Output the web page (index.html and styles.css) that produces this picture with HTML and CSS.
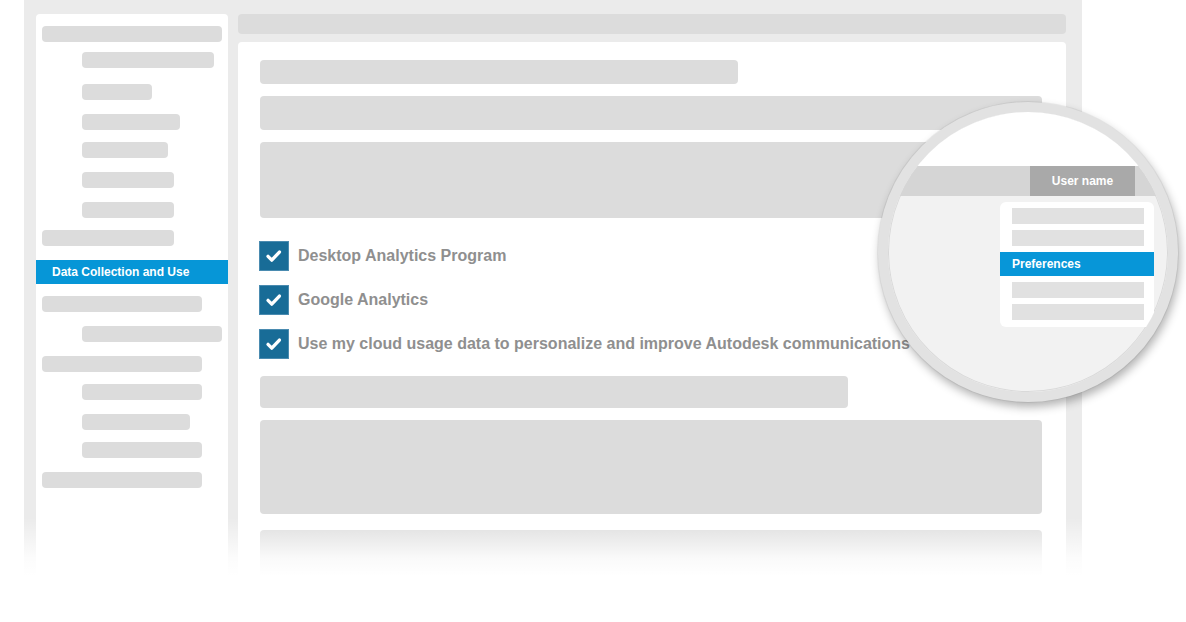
FILE: index.html
```html
<!DOCTYPE html>
<html lang="en">
<head>
<meta charset="utf-8">
<title>Data Collection and Use</title>
<link rel="stylesheet" href="styles.css">
</head>
<body>
<div class="page">
  <div class="frame">
    <aside class="sidebar">
      <div class="nav-ph lvl1" style="width:180px"></div>
      <div class="nav-ph lvl2 t10" style="width:132px"></div>
      <div class="nav-ph lvl2 t16" style="width:70px"></div>
      <div class="nav-ph lvl2 t14" style="width:98px"></div>
      <div class="nav-ph lvl2 t12" style="width:86px"></div>
      <div class="nav-ph lvl2 t14" style="width:92px"></div>
      <div class="nav-ph lvl2 t14" style="width:92px"></div>
      <div class="nav-ph lvl1 t12" style="width:132px"></div>
      <div class="nav-active t14">Data Collection and Use</div>
      <div class="nav-ph lvl1 t12" style="width:160px"></div>
      <div class="nav-ph lvl2 t14" style="width:140px"></div>
      <div class="nav-ph lvl1 t14" style="width:160px"></div>
      <div class="nav-ph lvl2 t12" style="width:120px"></div>
      <div class="nav-ph lvl2 t14" style="width:108px"></div>
      <div class="nav-ph lvl2 t12" style="width:120px"></div>
      <div class="nav-ph lvl1 t14" style="width:160px"></div>
    </aside>
    <main class="main">
      <div class="topbar"></div>
      <section class="card">
        <div class="ph h24" style="width:478px"></div>
        <div class="ph h34 gap12"></div>
        <div class="ph h76 gap12"></div>
        <ul class="checks">
          <li class="check">
            <span class="box"><svg viewBox="0 0 30 30" width="28" height="28"><path d="M8.6 15.4 L12.6 19.4 L20.8 10.8" fill="none" stroke="#fff" stroke-width="3.6" stroke-linecap="round" stroke-linejoin="round"/></svg></span>
            <span class="label">Desktop Analytics Program</span>
          </li>
          <li class="check">
            <span class="box"><svg viewBox="0 0 30 30" width="28" height="28"><path d="M8.6 15.4 L12.6 19.4 L20.8 10.8" fill="none" stroke="#fff" stroke-width="3.6" stroke-linecap="round" stroke-linejoin="round"/></svg></span>
            <span class="label">Google Analytics</span>
          </li>
          <li class="check">
            <span class="box"><svg viewBox="0 0 30 30" width="28" height="28"><path d="M8.6 15.4 L12.6 19.4 L20.8 10.8" fill="none" stroke="#fff" stroke-width="3.6" stroke-linecap="round" stroke-linejoin="round"/></svg></span>
            <span class="label">Use my cloud usage data to personalize and improve Autodesk communications</span>
          </li>
        </ul>
        <div class="ph h32 gap17" style="width:588px"></div>
        <div class="ph h94 gap12"></div>
        <div class="ph h60 gap16"></div>
      </section>
    </main>
  </div>
  <div class="fade"></div>
  <div class="magnifier">
    <div class="mag-top"></div>
    <div class="mag-bar">
      <span class="user-btn">User name</span>
    </div>
    <div class="mag-body">
      <div class="dropdown">
        <div class="dd-ph"></div>
        <div class="dd-ph"></div>
        <div class="dd-active">Preferences</div>
        <div class="dd-ph"></div>
        <div class="dd-ph"></div>
      </div>
    </div>
  </div>
</div>
</body>
</html>
```

FILE: styles.css
```css
* { box-sizing: border-box; }

html, body {
  margin: 0;
  padding: 0;
  background: #ffffff;
  font-family: "Liberation Sans", Arial, Helvetica, sans-serif;
}

.page {
  position: relative;
  width: 1186px;
  height: 622px;
  overflow: hidden;
}

.frame {
  margin-left: 24px;
  width: 1058px;
  height: 600px;
  background: #ebebeb;
  padding: 14px 16px 0 12px;
  display: flex;
  gap: 10px;
}

/* Sidebar */
.sidebar {
  width: 192px;
  flex: none;
  background: #ffffff;
  border-radius: 4px 4px 0 0;
  padding: 12px 6px 0 6px;
  display: flex;
  flex-direction: column;
}

.nav-ph {
  height: 16px;
  background: #dcdcdc;
  border-radius: 4px;
}

.nav-ph.lvl2 { margin-left: 40px; }

.t10 { margin-top: 10px; }
.t12 { margin-top: 12px; }
.t14 { margin-top: 14px; }
.t16 { margin-top: 16px; }

.nav-active {
  margin-left: -6px;
  margin-right: -6px;
  height: 24px;
  line-height: 24px;
  padding-left: 16px;
  background: #0696d7;
  color: #ffffff;
  font-size: 12px;
  font-weight: bold;
}

/* Main */
.main {
  flex: 1;
  display: flex;
  flex-direction: column;
}

.topbar {
  height: 20px;
  background: #dcdcdc;
  border-radius: 4px;
  margin-bottom: 8px;
  flex: none;
}

.card {
  flex: 1;
  background: #ffffff;
  border-radius: 4px 4px 0 0;
  padding: 18px 24px 0 22px;
  display: flex;
  flex-direction: column;
}

.ph {
  background: #dcdcdc;
  border-radius: 4px;
  flex: none;
}

.h24 { height: 24px; }
.h32 { height: 32px; }
.h34 { height: 34px; }
.h60 { height: 60px; }
.h76 { height: 76px; }
.h94 { height: 94px; }

.gap12 { margin-top: 12px; }
.gap16 { margin-top: 16px; }
.gap17 { margin-top: 17px; }

.checks {
  list-style: none;
  margin: 23px 0 0 -1px;
  padding: 0;
  display: flex;
  flex-direction: column;
  gap: 14px;
}

.check {
  display: flex;
  align-items: center;
  gap: 9px;
  height: 30px;
}

.box {
  width: 30px;
  height: 30px;
  flex: none;
  background: #186c97;
  border: 1px solid #4a8bb0;
  display: flex;
  align-items: center;
  justify-content: center;
}

.box svg { display: block; }

.label {
  font-size: 16px;
  font-weight: bold;
  color: #8f8f8f;
  white-space: nowrap;
}

/* Bottom fade */
.fade {
  position: absolute;
  left: 0;
  right: 0;
  top: 518px;
  bottom: 0;
  background: linear-gradient(to bottom, rgba(255,255,255,0) 0px, rgba(255,255,255,0.85) 40px, #ffffff 58px);
}

/* Magnifier */
.magnifier {
  position: absolute;
  left: 878px;
  top: 102px;
  width: 300px;
  height: 300px;
  border-radius: 50%;
  border: 10px solid #e2e2e2;
  background: #f2f2f2;
  overflow: hidden;
  box-shadow: 2px 5px 10px rgba(0,0,0,0.30), 0 0 0 1px rgba(0,0,0,0.05), inset 0 0 0 1px rgba(0,0,0,0.10);
  display: flex;
  flex-direction: column;
}

.mag-top {
  height: 54px;
  background: #ffffff;
  flex: none;
}

.mag-bar {
  height: 30px;
  flex: none;
  background: #d5d5d5;
  padding-left: 142px;
  display: flex;
}

.user-btn {
  width: 105px;
  height: 30px;
  background: #a9a9a9;
  color: #ffffff;
  font-size: 12px;
  font-weight: bold;
  display: flex;
  align-items: center;
  justify-content: center;
}

.mag-body {
  padding: 6px 0 0 112px;
}

.dropdown {
  width: 154px;
  background: #ffffff;
  border-radius: 6px;
  padding: 6px 10px 7px 12px;
  display: flex;
  flex-direction: column;
  gap: 6px;
}

.dd-ph {
  height: 16px;
  background: #e1e1e1;
}

.dd-active {
  margin: 0 -10px 0 -12px;
  height: 24px;
  line-height: 24px;
  padding-left: 12px;
  background: #0796d8;
  color: #ffffff;
  font-size: 12px;
  font-weight: bold;
}
```
